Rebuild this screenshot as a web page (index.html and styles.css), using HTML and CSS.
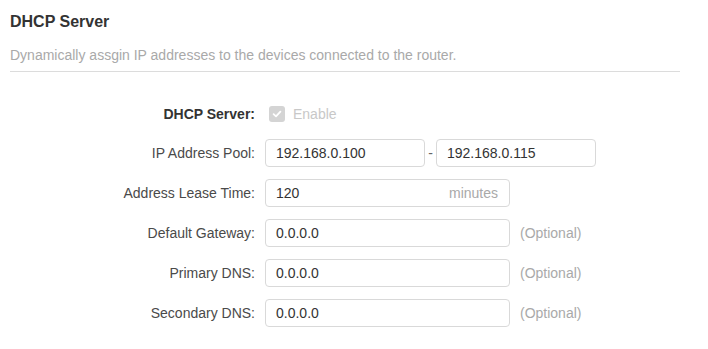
FILE: index.html
```html
<!DOCTYPE html>
<html lang="en">
<head>
  <meta charset="UTF-8">
  <meta name="viewport" content="width=device-width, initial-scale=1.0">
  <title>DHCP Server</title>
  <link rel="stylesheet" href="styles.css">
</head>
<body>
  <div class="panel">
    <div class="panel-head">
      <h2 class="title">DHCP Server</h2>
      <p class="desc">Dynamically assgin IP addresses to the devices connected to the router.</p>
    </div>

    <div class="form">
      <div class="row row-check">
        <label class="label label-bold">DHCP Server:</label>
        <div class="field">
          <span class="checkbox">
            <svg width="10" height="10" viewBox="0 0 10 10"><path d="M1.6 5.2 L4 7.4 L8.4 2.6" fill="none" stroke="#fff" stroke-width="1.8" stroke-linecap="round" stroke-linejoin="round"/></svg>
          </span>
          <span class="check-text">Enable</span>
        </div>
      </div>

      <div class="row">
        <label class="label">IP Address Pool:</label>
        <div class="field">
          <div class="input short"><span class="value">192.168.0.100</span></div>
          <span class="dash">-</span>
          <div class="input short"><span class="value">192.168.0.115</span></div>
        </div>
      </div>

      <div class="row">
        <label class="label">Address Lease Time:</label>
        <div class="field">
          <div class="input"><span class="value">120</span><span class="unit">minutes</span></div>
        </div>
      </div>

      <div class="row">
        <label class="label">Default Gateway:</label>
        <div class="field">
          <div class="input"><span class="value">0.0.0.0</span></div>
          <span class="hint">(Optional)</span>
        </div>
      </div>

      <div class="row">
        <label class="label">Primary DNS:</label>
        <div class="field">
          <div class="input"><span class="value">0.0.0.0</span></div>
          <span class="hint">(Optional)</span>
        </div>
      </div>

      <div class="row">
        <label class="label">Secondary DNS:</label>
        <div class="field">
          <div class="input"><span class="value">0.0.0.0</span></div>
          <span class="hint">(Optional)</span>
        </div>
      </div>
    </div>
  </div>
</body>
</html>
```

FILE: styles.css
```css
* {
  box-sizing: border-box;
  margin: 0;
  padding: 0;
}

body {
  background: #fff;
  font-family: "Liberation Sans", Arial, sans-serif;
  font-size: 14px;
  color: #4a4a4a;
}

.panel {
  padding-top: 12px;
}

.panel-head {
  margin-left: 10px;
  width: 670px;
  padding-bottom: 6px;
  border-bottom: 1px solid #dcdcdc;
}

.title {
  font-size: 16px;
  line-height: 20px;
  font-weight: bold;
  color: #333;
}

.desc {
  margin-top: 13px;
  line-height: 20px;
  color: #a9a9a9;
}

.form {
  padding-top: 28px;
  display: flex;
  flex-direction: column;
  gap: 12px;
}

.row {
  display: flex;
  align-items: center;
  gap: 10px;
  height: 28px;
}

.row-check {
  margin-bottom: -1px;
}

.label {
  width: 255px;
  text-align: right;
  color: #4a4a4a;
}

.label-bold {
  font-weight: bold;
  color: #333;
}

.field {
  display: flex;
  align-items: center;
}

.checkbox {
  width: 16px;
  height: 16px;
  margin-left: 4px;
  border-radius: 3px;
  background: #d4d4d4;
  display: flex;
  align-items: center;
  justify-content: center;
}

.check-text {
  margin-left: 8px;
  color: #c8c8c8;
}

.input {
  width: 245px;
  height: 28px;
  border: 1px solid #d9d9d9;
  border-radius: 4px;
  padding: 0 11px 0 10px;
  display: flex;
  align-items: center;
  justify-content: space-between;
}

.input.short {
  width: 160px;
}

.value {
  color: #333;
}

.unit {
  color: #a9a9a9;
}

.dash {
  width: 11px;
  text-align: center;
  color: #666;
}

.hint {
  margin-left: 10px;
  color: #a9a9a9;
}
```
